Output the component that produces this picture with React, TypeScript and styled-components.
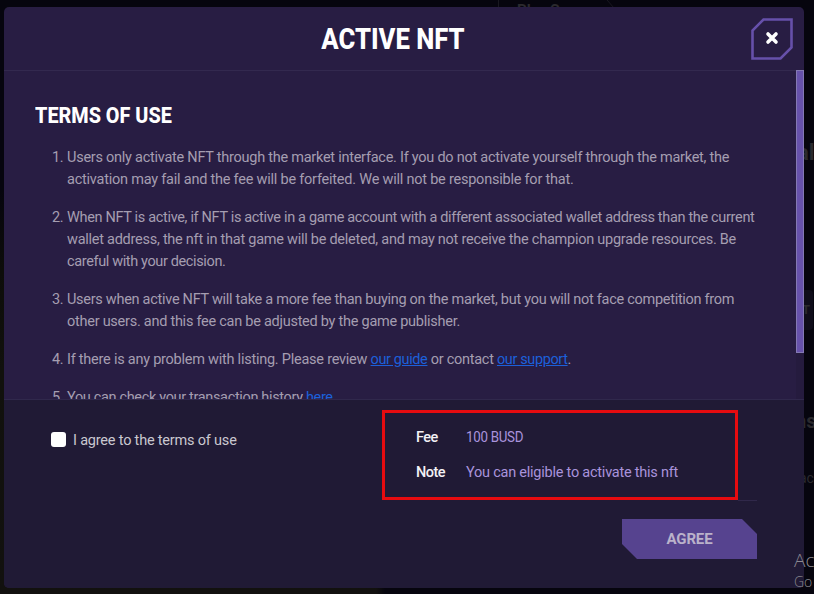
import React from 'react';
import styled, { createGlobalStyle } from 'styled-components';

const GlobalStyle = createGlobalStyle`
  * { box-sizing: border-box; }
  body { margin: 0; overflow: hidden; background: #06050e; font-family: Roboto, "Liberation Sans", sans-serif; }
`;

const Page = styled.main`
  position: relative;
  width: 814px;
  height: 594px;
  padding: 7px 10px 6px 4px;
  overflow: hidden;
  background:
    linear-gradient(90deg, transparent 376px, #06050e 385px) 0 584px / 100% 10px no-repeat,
    linear-gradient(180deg, #06050e 190px, #0d0d0a 270px, #11110d 370px, #12110f 594px) 0 0 / 814px 594px;
`;

const Backdrop = styled.div`
  position: absolute;
  top: 0;
  left: 4px;
  right: 0;
  height: 584px;
  background: #06050e;
`;

const BackdropText = styled.span<{ $x: number; $y: number; $size: number; $bold?: boolean }>`
  position: absolute;
  left: ${p => p.$x}px;
  top: ${p => p.$y}px;
  font-size: ${p => p.$size}px;
  line-height: 1;
  font-weight: ${p => (p.$bold ? 700 : 400)};
  color: #2b2a2e;
  white-space: nowrap;
`;

const BackdropTab = styled.svg`
  position: absolute;
  left: 490px;
  top: 0;
`;

const BackdropButton = styled.div`
  position: absolute;
  left: 780px;
  top: 290px;
  width: 33px;
  height: 40px;
  border-radius: 4px;
  background: #0f0d1a;
`;

const Modal = styled.section`
  position: relative;
  display: flex;
  flex-direction: column;
  width: 800px;
  height: 581px;
  border-radius: 5px;
  overflow: hidden;
  background: #281d43;
`;

const Header = styled.header`
  display: flex;
  align-items: center;
  height: 63px;
  padding: 0 11px 0 31px;
`;

const Title = styled.h1`
  flex: 1;
  margin: 0;
  font-size: 29px;
  line-height: 40px;
  font-weight: 800;
  text-align: center;
  color: #fff;
  white-space: nowrap;
  transform: scaleX(0.885);
`;

const CloseButton = styled.button`
  display: block;
  width: 42px;
  height: 42px;
  padding: 0;
  border: 0;
  background: none;
  svg { display: block; }
`;

const Terms = styled.div`
  display: flex;
  height: 329px;
  overflow: hidden;
`;

const TermsContent = styled.div`
  flex: 1;
  padding: 31px 31px 0;
  border-top: 1px solid #33294f;
`;

const Scrollbar = styled.div`
  width: 8px;
  background: #251b3e;
`;

const Thumb = styled.div`
  height: 283px;
  background: #6752ab;
  border: 1px solid #8479b4;
`;

const SectionTitle = styled.h2`
  margin: 0 0 17px;
  font-size: 22px;
  line-height: 28px;
  font-weight: 800;
  color: #fff;
  transform: scaleX(0.9);
  transform-origin: left;
`;

const List = styled.ol`
  display: flex;
  flex-direction: column;
  gap: 16px;
  margin: 0;
  padding: 0;
  list-style: none;
  font-size: 14.5px;
  line-height: 22px;
  color: #a59eb1;
`;

const Item = styled.li`
  display: flex;
`;

const Marker = styled.span`
  width: 32px;
  padding-right: 4px;
  text-align: right;
  letter-spacing: -0.5px;
`;

const Line = styled.div`
  white-space: pre;
`;

const Run = styled.span<{ $ls: number }>`
  letter-spacing: ${p => p.$ls}px;
`;

const Link = styled.a`
  color: #1c60da;
  letter-spacing: -0.38px;
  text-decoration: underline;
`;

const Footer = styled.footer`
  display: flex;
  justify-content: space-between;
  flex: 1;
  padding: 10px 47px 0 47px;
  border-top: 1px solid #30284c;
  background: #201a35;
`;

const Agreement = styled.label`
  display: flex;
  align-items: center;
  gap: 7px;
  height: 22px;
  margin-top: 19px;
  font-size: 14.5px;
  letter-spacing: -0.2px;
  color: #cac8d0;
`;

const Checkbox = styled.input`
  appearance: none;
  width: 15px;
  height: 15px;
  margin: -1px 0 0;
  border-radius: 3px;
  background: #fff;
`;

const Summary = styled.div`
  display: flex;
  flex-direction: column;
  align-items: flex-end;
  width: 375px;
`;

const Details = styled.dl`
  display: grid;
  grid-template-columns: 50px 1fr;
  align-content: start;
  row-gap: 13px;
  align-self: flex-start;
  width: 356px;
  height: 90px;
  margin: 0;
  padding: 14px 0 0 31px;
  border: 3px solid #e60b10;
  font-size: 14.5px;
  line-height: 22px;
`;

const Term = styled.dt`
  font-weight: 500;
  letter-spacing: -0.5px;
  color: #f3f1f6;
`;

const Value = styled.dd<{ $ls: number; $scale?: number }>`
  margin: 0;
  letter-spacing: ${p => p.$ls}px;
  transform: scaleX(${p => p.$scale ?? 1});
  transform-origin: left;
  color: #a993dc;
`;

const Divider = styled.div`
  align-self: flex-end;
  width: 19px;
  height: 1px;
  background: #30284a;
`;

const AgreeButton = styled.button`
  width: 135px;
  height: 40px;
  margin-top: 18px;
  padding: 0;
  border: 0;
  clip-path: polygon(0 0, 120px 0, 100% 15px, 100% 100%, 15px 100%, 0 25px);
  background: #56438f;
  color: #bab2ca;
  font: 700 15px/40px Roboto, sans-serif;
  letter-spacing: -0.15px;
`;

const Watermark = styled.div`
  position: absolute;
  left: 794px;
  top: 549px;
  font-family: "Open Sans", sans-serif;
  font-weight: 300;
  color: #8b8990;
  white-space: nowrap;
`;

const WatermarkLine = styled.div<{ $size: number }>`
  height: 22px;
  font-size: ${p => p.$size}px;
  line-height: 22px;
`;

type Part = { text: string; ls?: number; link?: boolean };
const terms: Part[][][] = [
  [
    [{ text: 'Users only activate NFT through the market interface. If you do not activate yourself through the market, the', ls: -0.255 }],
    [{ text: 'activation may fail and the fee will be forfeited. We will not be responsible for that.', ls: -0.225 }],
  ],
  [
    [{ text: 'When NFT is active, if NFT is active in a game account with a different associated wallet address than the current', ls: -0.332 }],
    [{ text: 'wallet address, the nft in that game will be deleted, and may not receive the champion upgrade resources. Be', ls: -0.257 }],
    [{ text: 'careful with your decision.', ls: -0.37 }],
  ],
  [
    [{ text: 'Users when active NFT will take a more fee than buying on the market, but you will not face competition from', ls: -0.284 }],
    [{ text: 'other users. and this fee can be adjusted by the game publisher.', ls: -0.261 }],
  ],
  [
    [
      { text: 'If there is any problem with listing. Please review ', ls: -0.242 },
      { text: 'our guide', link: true },
      { text: ' or contact ', ls: -0.275 },
      { text: 'our support', link: true },
      { text: '.', ls: 0 },
    ],
  ],
  [[{ text: 'You can check your transaction history ', ls: -0.341 }, { text: 'here', link: true }]],
];

export default function App() {
  return (
    <>
      <GlobalStyle />
      <Page>
        <Backdrop />
        <BackdropTab width="150" height="8" fill="none" stroke="#191820">
          <path d="M8.500 0V8M117 0L124 8" />
        </BackdropTab>
        <BackdropText $x={517} $y={3} $size={15} $bold>Play Game</BackdropText>
        <BackdropText $x={797} $y={142} $size={22} $bold>al</BackdropText>
        <BackdropButton />
        <BackdropText $x={802} $y={303} $size={13} $bold>T</BackdropText>
        <BackdropText $x={795} $y={411} $size={20} $bold>ns</BackdropText>
        <BackdropText $x={799} $y={471} $size={14}>ac</BackdropText>
        <Modal>
          <Header>
            <Title>ACTIVE NFT</Title>
            <CloseButton aria-label="Close">
              <svg width="42" height="42" viewBox="0 0 42 42" fill="none">
                <path d="M12.500 1.500H40.500V29.500L29.500 40.500H1.500V12.500Z" stroke="#6650aa" strokeWidth="2.600" />
                <path d="M17 16L25 24M25 16L17 24" stroke="#fff" strokeWidth="3.600" strokeLinecap="round" />
              </svg>
            </CloseButton>
          </Header>
          <Terms>
            <TermsContent>
              <SectionTitle>TERMS OF USE</SectionTitle>
              <List>
                {terms.map((lines, i) => (
                  <Item key={i}>
                    <Marker>{i + 1}.</Marker>
                    <div>
                      {lines.map((parts, j) => (
                        <Line key={j}>
                          {parts.map((p, k) => (p.link ? <Link key={k}>{p.text}</Link> : <Run key={k} $ls={p.ls ?? 0}>{p.text}</Run>))}
                        </Line>
                      ))}
                    </div>
                  </Item>
                ))}
              </List>
            </TermsContent>
            <Scrollbar><Thumb /></Scrollbar>
          </Terms>
          <Footer>
            <Agreement><Checkbox type="checkbox" />I agree to the terms of use</Agreement>
            <Summary>
              <Details>
                <Term>Fee</Term><Value $ls={-0.3} $scale={0.92}>100 BUSD</Value>
                <Term>Note</Term><Value $ls={-0.235}>You can eligible to activate this nft</Value>
              </Details>
              <Divider />
              <AgreeButton>AGREE</AgreeButton>
            </Summary>
          </Footer>
        </Modal>
        <Watermark>
          <WatermarkLine $size={19}>Ac</WatermarkLine>
          <WatermarkLine $size={14}>Go</WatermarkLine>
        </Watermark>
      </Page>
    </>
  );
}
